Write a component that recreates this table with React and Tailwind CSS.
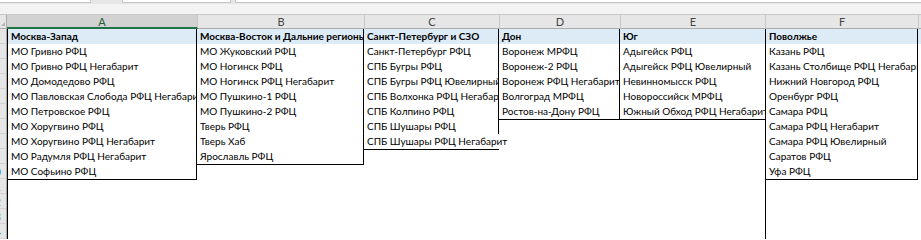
import React from "react";

const COLS = [
  {
    key: "A",
    w: 190,
    head: "Москва-Запад",
    items: [
      "МО Гривно РФЦ",
      "МО Гривно РФЦ Негабарит",
      "МО Домодедово РФЦ",
      "МО Павловская Слобода РФЦ Негабарит",
      "МО Петровское РФЦ",
      "МО Хоругвино РФЦ",
      "МО Хоругвино РФЦ Негабарит",
      "МО Радумля РФЦ Негабарит",
      "МО Софьино РФЦ",
    ],
    left: true,
    right: true,
  },
  {
    key: "B",
    w: 167,
    head: "Москва-Восток и Дальние регионы",
    items: [
      "МО Жуковский РФЦ",
      "МО Ногинск РФЦ",
      "МО Ногинск РФЦ Негабарит",
      "МО Пушкино-1 РФЦ",
      "МО Пушкино-2 РФЦ",
      "Тверь РФЦ",
      "Тверь Хаб",
      "Ярославль РФЦ",
    ],
    right: true,
  },
  {
    key: "C",
    w: 135,
    head: "Санкт-Петербург и СЗО",
    items: [
      "Санкт-Петербург РФЦ",
      "СПБ Бугры РФЦ",
      "СПБ Бугры РФЦ Ювелирный",
      "СПБ Волхонка РФЦ Негабарит",
      "СПБ Колпино РФЦ",
      "СПБ Шушары РФЦ",
      "СПБ Шушары РФЦ Негабарит",
    ],
    right: true,
    spillLast: true,
  },
  {
    key: "D",
    w: 121,
    head: "Дон",
    items: [
      "Воронеж МРФЦ",
      "Воронеж-2 РФЦ",
      "Воронеж РФЦ Негабарит",
      "Волгоград МРФЦ",
      "Ростов-на-Дону РФЦ",
    ],
    right: true,
  },
  {
    key: "E",
    w: 145,
    head: "Юг",
    items: [
      "Адыгейск РФЦ",
      "Адыгейск РФЦ Ювелирный",
      "Невинномысск РФЦ",
      "Новороссийск МРФЦ",
      "Южный Обход РФЦ Негабарит",
    ],
  },
  {
    key: "F",
    w: 153,
    head: "Поволжье",
    items: [
      "Казань РФЦ",
      "Казань Столбище РФЦ Негабарит",
      "Нижний Новгород РФЦ",
      "Оренбург РФЦ",
      "Самара РФЦ",
      "Самара РФЦ Негабарит",
      "Самара РФЦ Ювелирный",
      "Саратов РФЦ",
      "Уфа РФЦ",
    ],
    left: true,
    right: true,
  },
];

const ROWS = 14;

function Column({ col, idx }) {
  const cells = [col.head, ...col.items];
  const next = COLS[idx + 1];
  const nextCount = next ? next.items.length + 1 : 0;

  return (
    <div
      className={`flex flex-col shrink-0 ${col.left ? "border-l border-black" : ""}`}
      style={{ width: col.w }}
    >
      <div className="border-b border-black">
        {cells.map((text, i) => {
          const isHead = i === 0;
          const last = i === cells.length - 1;
          const spill = col.spillLast && last && i >= nextCount;
          return (
            <div
              key={i}
              className={`h-[15px] leading-[15px] pl-[3px] whitespace-nowrap relative ${
                isHead ? "bg-[#ddebf7] font-bold" : ""
              } ${spill ? "overflow-visible z-10 mr-px" : "overflow-hidden"} ${
                col.right && !spill ? "border-r border-black" : ""
              }`}
            >
              {text}
            </div>
          );
        })}
      </div>
    </div>
  );
}

export default function App() {
  return (
    <div
      className="w-[921px] h-[240px] overflow-hidden bg-white text-black text-[10px]"
      style={{ fontFamily: "Lato, 'Noto Sans', sans-serif" }}
    >
      {/* formula bar bottom */}
      <div className="h-[4px] flex bg-[#e6e6e6]">
        <div className="w-[91px] h-[3px] bg-white border-r border-b border-[#c6c6c6]" />
        <div className="w-[31px]" />
        <div className="w-[109px] h-[3px] bg-white border-x border-b border-[#c6c6c6]" />
        <div className="w-[4px]" />
        <div className="flex-1 h-[3px] bg-white border-l border-b border-[#c6c6c6]" />
      </div>
      <div className="h-[10px] bg-[#f3f3f3]" />

      {/* column headers */}
      <div className="flex h-[15px] bg-[#e6e6e6] border-t border-[#c8c8c8] text-[#444] text-[11px]">
        <div className="w-[7px] shrink-0 relative border-r border-[#ababab] border-b">
          <div className="absolute right-[1px] bottom-[2px] w-0 h-0 border-l-[4px] border-l-transparent border-b-[4px] border-b-[#b4b4b4]" />
        </div>
        {COLS.map((c, i) => (
          <div
            key={c.key}
            className={`shrink-0 flex items-center justify-center leading-none border-r border-[#c6c6c6] ${
              i === 0
                ? "bg-[#d2d2d2] border-b-2 border-b-[#217346] text-[#1e5e38]"
                : "border-b border-b-[#ababab]"
            }`}
            style={{ width: c.w + (i === 0 ? 1 : 0) }}
          >
            {c.key}
          </div>
        ))}
        <div className="flex-1 border-b border-b-[#ababab]" />
      </div>

      {/* sheet body */}
      <div className="flex">
        <div className="w-[7px] shrink-0 overflow-hidden bg-[#e6e6e6] border-r border-[#ababab]">
          {Array.from({ length: ROWS }).map((_, i) => (
            <div
              key={i}
              className={`h-[15px] w-[25px] -ml-[18px] text-center leading-[15px] text-[11px] border-b border-[#d4d4d4] ${
                i >= 9 ? "text-[#2a7fd0]" : "text-[#444]"
              }`}
            >
              {i + 1}
            </div>
          ))}
        </div>
        {COLS.map((c, i) => (
          <Column key={c.key} col={c} idx={i} />
        ))}
        <div className="flex-1">
          <div className="h-[15px] bg-[#ddebf7]" />
        </div>
      </div>
    </div>
  );
}
